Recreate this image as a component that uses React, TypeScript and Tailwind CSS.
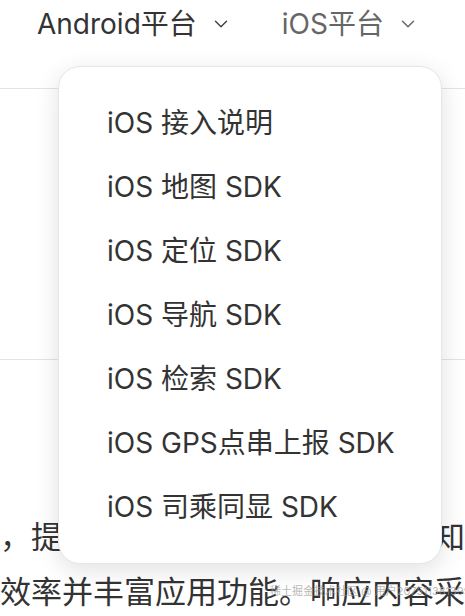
import { ChevronDown } from 'lucide-react'

const iosItems = [
  'iOS 接入说明',
  'iOS 地图 SDK',
  'iOS 定位 SDK',
  'iOS 导航 SDK',
  'iOS 检索 SDK',
  'iOS GPS点串上报 SDK',
  'iOS 司乘同显 SDK',
]

const font = { fontFamily: 'Inter, "Noto Sans CJK SC", sans-serif' }

export default function App() {
  return (
    <div className="relative h-[616px] w-[465px] overflow-hidden bg-white text-[#333]" style={font}>
      {/* Header */}
      <header className="flex h-[89px] items-start border-b border-[#e3e3e3] pl-[37px] pt-[5px]">
        <div className="flex items-center gap-[50px]">
          <button className="flex items-center gap-[13px] text-[28px] leading-[38px] text-[#333]">
            Android平台
            <ChevronDown className="h-[22px] w-[22px] text-[#444]" strokeWidth={1.6} />
          </button>
          <button className="flex items-center gap-[13px] text-[28px] leading-[38px] text-[#666]">
            iOS平台
            <ChevronDown className="h-[22px] w-[22px] text-[#666]" strokeWidth={1.6} />
          </button>
        </div>
      </header>

      {/* Banner */}
      <div className="h-[271px] border-b border-[#e3e3e3]" />

      {/* Body */}
      <div className="pt-[149px] text-[31px] leading-[55px] text-[#333]">
        <p className="whitespace-nowrap">，提高开发者接入地图服务的认知</p>
        <p className="whitespace-nowrap">效率并丰富应用功能。响应内容采</p>
      </div>

      {/* Dropdown */}
      <div className="absolute left-[58px] top-[66px] w-[384px] rounded-[22px] border border-[#e6e6e6] bg-white py-[24px] shadow-[0_6px_24px_rgba(0,0,0,0.12)]">
        {iosItems.map((item) => (
          <div key={item} className="flex h-[64px] items-center pl-[48px] text-[28px] text-[#333]">
            {item}
          </div>
        ))}
      </div>

      {/* Watermark */}
      <div className="absolute left-[270px] top-[583px] whitespace-nowrap text-[11px] text-[#999]/70">
        稀土掘金技术社区 @ 用户2075113813991
      </div>
    </div>
  )
}
